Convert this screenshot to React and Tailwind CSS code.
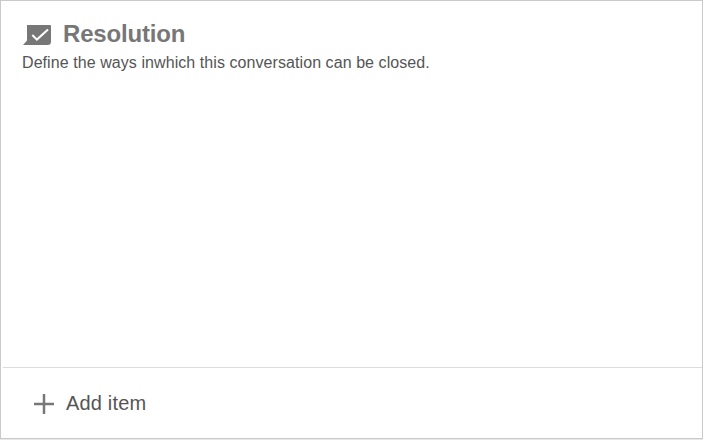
function ResolutionIcon() {
  return (
    <svg className="block h-5 w-7 shrink-0" viewBox="0 0 28 20" fill="none">
      <path d="M4 0H27Q28 0 28 1V16.5Q28 20 24.5 20H0L4 15.5Z" fill="#777777" />
      <path d="M9.3 10L13.9 14.6L25 4.4" stroke="#ffffff" strokeWidth="2" />
    </svg>
  );
}

function PlusIcon() {
  return (
    <svg className="block size-5 shrink-0" viewBox="0 0 20 20" fill="none">
      <path d="M10 0V20M0 10H20" stroke="#777777" strokeWidth="2.5" />
    </svg>
  );
}

export default function App() {
  return (
    <div className="h-[440px] w-[704px] overflow-hidden bg-white font-['Liberation_Sans',Arial,sans-serif]">
      <section className="flex h-[439px] w-[703px] flex-col border border-[#cacaca] bg-white shadow-[0_1px_0_#e8e8e8]">
        <header className="flex-1 pl-[21px] pt-[18px]">
          <div className="flex h-[30px] items-center gap-3 pl-px">
            <div className="pt-0.5"><ResolutionIcon /></div>
            <h1 className="text-2xl font-bold tracking-[-0.17px] text-[#777777]">Resolution</h1>
          </div>
          <p className="mt-0.5 text-base tracking-[0.072px] text-[#555555]">Define the ways inwhich this conversation can be closed.</p>
        </header>
        <button className="ml-0.5 flex h-[71px] items-center gap-3 border-t border-[#dcdcdc] pl-[31px] text-left">
          <div className="pt-0.5"><PlusIcon /></div>
          <span className="text-xl tracking-[0.18px] text-[#555555]">Add item</span>
        </button>
      </section>
    </div>
  );
}
